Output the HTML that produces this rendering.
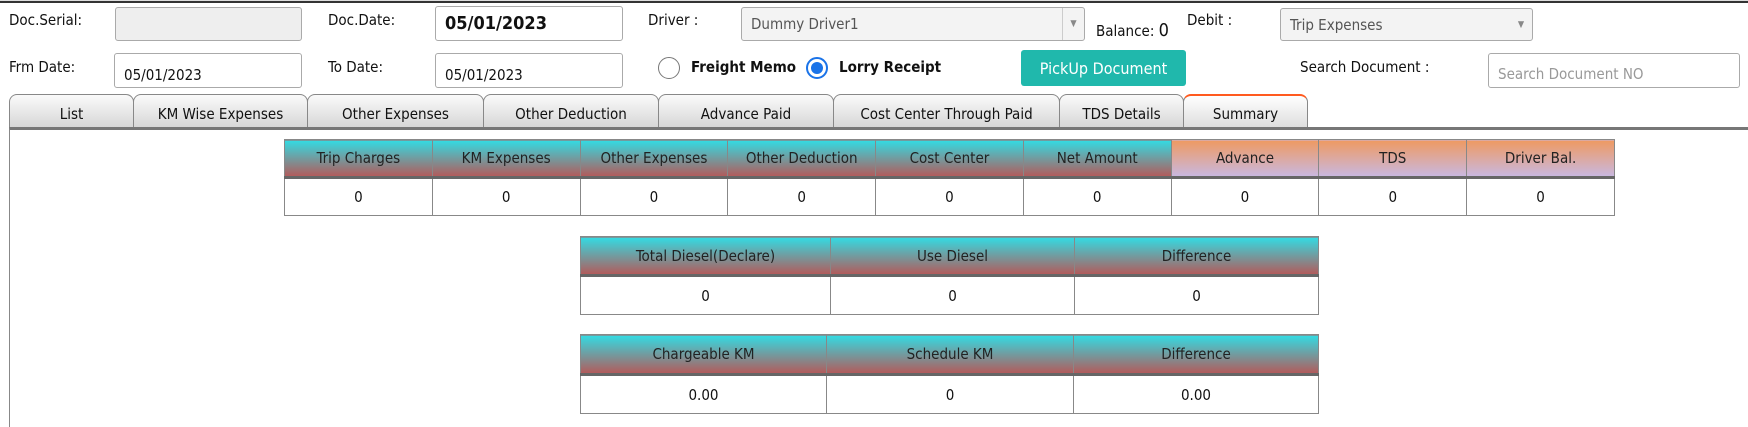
<!DOCTYPE html>
<html><head><meta charset="utf-8"><style>
*{box-sizing:border-box;margin:0;padding:0}
body{width:1748px;height:423px;background:#fff;position:relative;overflow:hidden;font-family:"DejaVu Sans Condensed","Liberation Sans Narrow","Liberation Sans",sans-serif;font-size:14px;color:#111}
.a{position:absolute}
.lbl{font-family:"Liberation Sans Narrow","DejaVu Sans Condensed",sans-serif;font-size:15px}
.inp{position:absolute;border:1px solid #aaa;border-radius:3px;background:#fff;font-size:15px;padding-left:9px;display:flex;align-items:center;font-family:"Liberation Sans Narrow","DejaVu Sans Condensed",sans-serif}
.sel{background:#f3f3f3;color:#555}
.arr{position:absolute;right:0;top:0;bottom:0;width:22px;border-left:1px solid #ccc;display:flex;align-items:center;justify-content:center;font-size:9px;color:#888}
.radio{position:absolute;width:22px;height:22px;border-radius:50%;border:1px solid #777;background:#fff}
.tab{position:absolute;top:94px;height:34px;border:1px solid #888;border-bottom:none;border-radius:8px 8px 0 0;background:linear-gradient(#fafafa,#d6d6d6);font-size:15px;display:flex;align-items:center;justify-content:center;padding-top:4px}
table{position:absolute;border-collapse:collapse;table-layout:fixed}
td,th{border:1px solid #888;text-align:center;font-weight:normal;font-size:15px}
th{background:linear-gradient(#33dbe3,#b35a5a);border-bottom:3px solid #666;color:#222}
th.o{background:linear-gradient(#ee9a62,#c9b8e0)}
</style></head><body>
<div class="a" style="left:0;top:0;width:1748px;height:3px;background:#ddd;border-bottom:2px solid #333"></div>
<div class="a lbl" style="left:9px;top:11px">Doc.Serial:</div>
<div class="inp" style="left:115px;top:7px;width:187px;height:34px;background:#eee"></div>
<div class="a lbl" style="left:328px;top:11px">Doc.Date:</div>
<div class="inp" style="left:435px;top:6px;width:188px;height:35px;font-weight:bold;font-size:18px;font-family:'DejaVu Sans Condensed',sans-serif">05/01/2023</div>
<div class="a lbl" style="left:648px;top:11px">Driver :</div>
<div class="inp sel" style="left:741px;top:7px;width:344px;height:34px;font-family:'DejaVu Sans Condensed',sans-serif">Dummy Driver1<div class="arr">▼</div></div>
<div class="a lbl" style="left:1096px;top:20px">Balance: <span style="font-size:18px">0</span></div>
<div class="a lbl" style="left:1187px;top:11px">Debit :</div>
<div class="inp sel" style="left:1280px;top:8px;width:253px;height:33px">Trip Expenses<div class="arr" style="border:none">▼</div></div>

<div class="a lbl" style="left:9px;top:58px">Frm Date:</div>
<div class="inp" style="left:114px;top:53px;width:188px;height:35px;padding-top:8px">05/01/2023</div>
<div class="a lbl" style="left:328px;top:58px">To Date:</div>
<div class="inp" style="left:435px;top:53px;width:188px;height:35px;padding-top:8px">05/01/2023</div>
<div class="radio" style="left:658px;top:57px"></div>
<div class="a lbl" style="left:691px;top:58px;font-weight:bold">Freight Memo</div>
<div class="radio" style="left:806px;top:57px;border:2px solid #1a73e8"><div style="position:absolute;left:3px;top:3px;width:12px;height:12px;border-radius:50%;background:#1a73e8"></div></div>
<div class="a lbl" style="left:839px;top:58px;font-weight:bold">Lorry Receipt</div>
<div class="a lbl" style="left:1021px;top:50px;width:165px;height:36px;background:#20b8ac;color:#fff;border-radius:3px;display:flex;align-items:center;justify-content:center;font-size:16px">PickUp Document</div>
<div class="a lbl" style="left:1300px;top:58px">Search Document :</div>
<div class="inp" style="left:1488px;top:53px;width:252px;height:35px;color:#999;padding-top:6px">Search Document NO</div>

<div class="tab" style="left:9px;width:125px">List</div>
<div class="tab" style="left:133px;width:175px">KM Wise Expenses</div>
<div class="tab" style="left:307px;width:177px">Other Expenses</div>
<div class="tab" style="left:483px;width:176px">Other Deduction</div>
<div class="tab" style="left:658px;width:176px">Advance Paid</div>
<div class="tab" style="left:833px;width:227px">Cost Center Through Paid</div>
<div class="tab" style="left:1059px;width:125px">TDS Details</div>
<div class="tab" style="left:1183px;width:125px;border-top:2px solid #ff5a1f;background:linear-gradient(#fff,#ddd)">Summary</div>
<div class="a" style="left:9px;top:127px;width:1748px;height:300px;border-top:3px solid #777;border-left:1px solid #888"></div>

<table style="left:284px;top:139px;width:1331px">
<tr style="height:38px"><th>Trip Charges</th><th>KM Expenses</th><th>Other Expenses</th><th>Other Deduction</th><th>Cost Center</th><th>Net Amount</th><th class="o">Advance</th><th class="o">TDS</th><th class="o">Driver Bal.</th></tr>
<tr style="height:38px"><td>0</td><td>0</td><td>0</td><td>0</td><td>0</td><td>0</td><td>0</td><td>0</td><td>0</td></tr></table>

<table style="left:580px;top:236px;width:739px">
<colgroup><col style="width:250px"><col style="width:244px"><col></colgroup>
<tr style="height:39px"><th>Total Diesel(Declare)</th><th>Use Diesel</th><th>Difference</th></tr>
<tr style="height:39px"><td>0</td><td>0</td><td>0</td></tr></table>

<table style="left:580px;top:334px;width:739px">
<colgroup><col style="width:246px"><col style="width:247px"><col></colgroup>
<tr style="height:40px"><th>Chargeable KM</th><th>Schedule KM</th><th>Difference</th></tr>
<tr style="height:39px"><td>0.00</td><td>0</td><td>0.00</td></tr></table>
</body></html>
